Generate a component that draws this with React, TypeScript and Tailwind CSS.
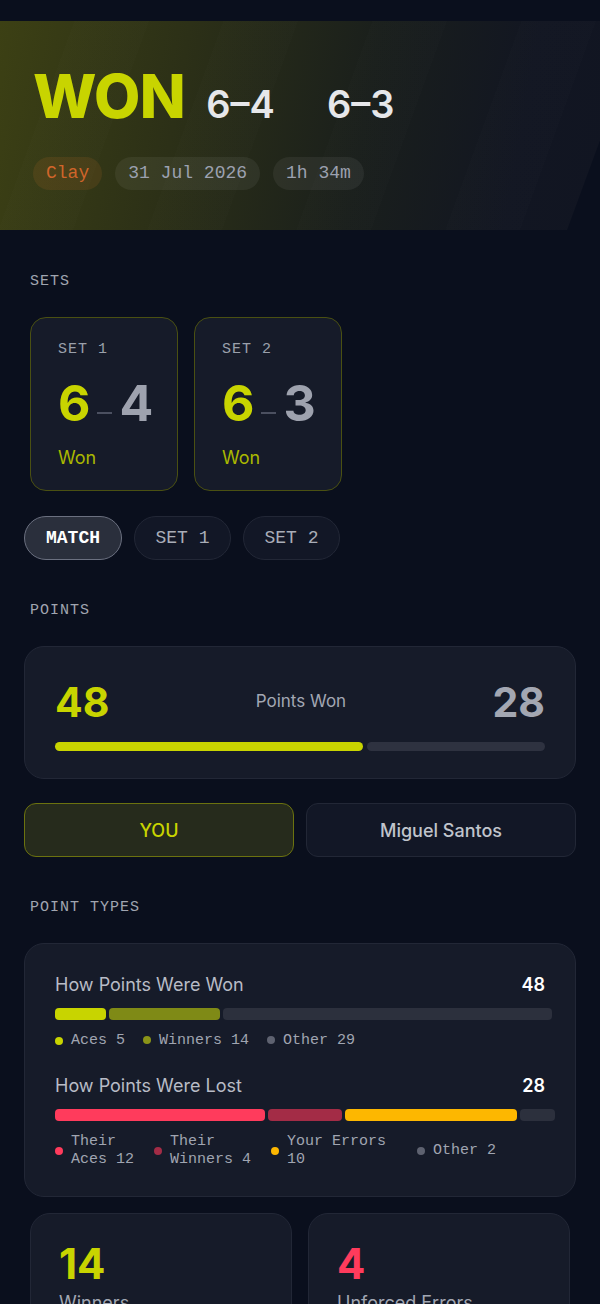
import React from 'react';

const sans = "font-['Inter','Noto_Sans',sans-serif]";
const mono = "font-['Liberation_Mono','DejaVu_Sans_Mono',monospace]";

const SectionLabel: React.FC<{ children: React.ReactNode }> = ({ children }) => (
  <div className={`${mono} ml-[6px] text-[15px] leading-5 tracking-[1px] text-[#a0a5b0]`}>{children}</div>
);

const SetCard: React.FC<{ label: string; you: number; them: number }> = ({ label, you, them }) => (
  <div className="w-[148px] h-[174px] rounded-[16px] border border-[#4a5012] bg-[#161b29] pl-[27px] pt-[22px]">
    <div className={`${mono} text-[15px] leading-5 tracking-[1px] text-[#9aa0ab]`}>{label}</div>
    <div className={`${sans} mt-[18px] flex items-center font-bold text-[50px] leading-[50px]`}>
      <span className="text-[#c8d400]">{you}</span>
      <span className="mx-[7px] mt-[20px] h-[2px] w-[15px] bg-[#4b5060]" />
      <span className="text-[#9ea2ae]">{them}</span>
    </div>
    <div className={`${sans} mt-[18px] text-[18px] leading-6 text-[#aab800]`}>Won</div>
  </div>
);

const Dot: React.FC<{ color: string }> = ({ color }) => (
  <span className={`inline-block w-[8px] h-[8px] rounded-full shrink-0 ${color}`} />
);

export default function App() {
  return (
    <div className={`${sans} min-h-screen w-[600px] bg-[#0a0f1d] pt-[21px] overflow-hidden`}>
      {/* Header */}
      <div className="relative h-[209px] bg-[linear-gradient(100deg,#3c4014_0%,#2c3017_30%,#1a1f1c_60%,#121622_85%,#111522_100%)] [clip-path:polygon(0_0,100%_0,100%_57%,94.5%_100%,0_100%)]">
        <div className="absolute inset-0 bg-[repeating-linear-gradient(110deg,transparent_0px,transparent_70px,rgba(255,255,255,0.007)_70px,rgba(255,255,255,0.007)_140px)]" />
        <div className="relative pl-[33px] pt-[40px]">
          <div className="flex items-baseline">
            <span className="text-[60px] leading-[70px] font-extrabold tracking-[-0.5px] text-[#c8d400]">WON</span>
            <span className="ml-[21px] text-[38px] font-semibold text-[#e6e7ea]">6–4</span>
            <span className="ml-[52px] text-[38px] font-semibold text-[#e6e7ea]">6–3</span>
          </div>
          <div className={`${mono} mt-[24px] flex gap-[13px] text-[18px] leading-[33px]`}>
            <span className="rounded-full bg-[rgba(200,110,40,0.14)] px-[13px] text-[#d0652a]">Clay</span>
            <span className="rounded-full bg-[rgba(255,255,255,0.06)] px-[13px] text-[#9ca1b0]">31 Jul 2026</span>
            <span className="rounded-full bg-[rgba(255,255,255,0.06)] px-[13px] text-[#9ca1b0]">1h 34m</span>
          </div>
        </div>
      </div>

      <div className="px-6 pt-[42px]">
        <SectionLabel>SETS</SectionLabel>
        <div className="ml-[6px] mt-[25px] flex gap-[16px]">
          <SetCard label="SET 1" you={6} them={4} />
          <SetCard label="SET 2" you={6} them={3} />
        </div>

        {/* Tabs */}
        <div className={`${mono} mt-[25px] flex gap-[12px] text-[18px]`}>
          <button className="h-[44px] w-[98px] rounded-full border border-[#6b7080] bg-[#2a2f3c] font-bold text-white">MATCH</button>
          <button className="h-[44px] w-[97px] rounded-full border border-[#222736] bg-[#121726] text-[#a9adb8]">SET 1</button>
          <button className="h-[44px] w-[97px] rounded-full border border-[#222736] bg-[#121726] text-[#a9adb8]">SET 2</button>
        </div>

        <div className="mt-[41px]">
          <SectionLabel>POINTS</SectionLabel>
        </div>
        <div className="mt-[25px] h-[133px] rounded-[20px] border border-[#222736] bg-[#161b29] px-[30px] pt-[32px]">
          <div className="flex items-center justify-between">
            <span className="text-[41px] leading-[46px] font-bold text-[#c8d400]">48</span>
            <span className="text-[17px] text-[#a2a7b3]">Points Won</span>
            <span className="text-[41px] leading-[46px] font-bold text-[#a3a7b2]">28</span>
          </div>
          <div className="mt-[17px] flex gap-[4px]">
            <div className="h-[9px] w-[308px] rounded-full bg-[#c8d400]" />
            <div className="h-[9px] flex-1 rounded-full bg-[#2e3240]" />
          </div>
        </div>

        <div className="mt-[24px] flex gap-[12px] text-[18px] font-medium">
          <button className="h-[54px] flex-1 rounded-[12px] border border-[#6b720f] bg-[#262b1c] text-[#c8d400]">YOU</button>
          <button className="h-[54px] flex-1 rounded-[12px] border border-[#222736] bg-[#121726] text-[#c0c4cc]">Miguel Santos</button>
        </div>

        <div className="mt-[41px]">
          <SectionLabel>POINT TYPES</SectionLabel>
        </div>

        <div className="mt-[25px] h-[254px] rounded-[20px] border border-[#222736] bg-[#161b29] px-[30px] pt-[29px]">
          <div className="flex items-center justify-between">
            <span className="text-[18px] leading-6 text-[#b8bcc6]">How Points Were Won</span>
            <span className="text-[18px] leading-6 font-semibold text-white">48</span>
          </div>
          <div className="mt-[11px] flex gap-[3px] w-[497px]">
            <div className="h-[12px] w-[51px] rounded-[4px] bg-[#c8d400]" />
            <div className="h-[12px] w-[111px] rounded-[4px] bg-[#7f8a16]" />
            <div className="h-[12px] w-[329px] rounded-[4px] bg-[#2c303d]" />
          </div>
          <div className={`${mono} mt-[12px] flex items-center text-[15px] leading-[18px] text-[#a0a5b1]`}>
            <Dot color="bg-[#c8d400]" />
            <span className="ml-[8px]">Aces 5</span>
            <span className="ml-[18px]"><Dot color="bg-[#8a9418]" /></span>
            <span className="ml-[8px]">Winners 14</span>
            <span className="ml-[18px]"><Dot color="bg-[#5e6270]" /></span>
            <span className="ml-[8px]">Other 29</span>
          </div>

          <div className="mt-[24px] flex items-center justify-between">
            <span className="text-[18px] leading-6 text-[#b8bcc6]">How Points Were Lost</span>
            <span className="text-[18px] leading-6 font-semibold text-white">28</span>
          </div>
          <div className="mt-[11px] flex gap-[3px] w-[501px]">
            <div className="h-[12px] w-[210px] rounded-[4px] bg-[#ff3b5c]" />
            <div className="h-[12px] w-[74px] rounded-[4px] bg-[#a32c46]" />
            <div className="h-[12px] w-[172px] rounded-[4px] bg-[#fdb700]" />
            <div className="h-[12px] w-[35px] rounded-[4px] bg-[#2c303d]" />
          </div>
          <div className={`${mono} mt-[12px] flex items-center text-[15px] leading-[18px] text-[#a0a5b1]`}>
            <div className="flex items-center gap-[8px] w-[99px]">
              <Dot color="bg-[#ff3b5c]" />
              <span>Their<br />Aces 12</span>
            </div>
            <div className="flex items-center gap-[8px] w-[117px]">
              <Dot color="bg-[#a32c46]" />
              <span>Their<br />Winners 4</span>
            </div>
            <div className="flex items-center gap-[8px] w-[146px]">
              <Dot color="bg-[#fdb700]" />
              <span>Your Errors<br />10</span>
            </div>
            <div className="flex items-center gap-[8px]">
              <Dot color="bg-[#5e6270]" />
              <span>Other 2</span>
            </div>
          </div>
        </div>

        <div className="mx-[6px] mt-[16px] flex gap-[16px]">
          <div className="h-[140px] flex-1 rounded-[20px] border border-[#222736] bg-[#161b29] pl-[28px] pt-[27px]">
            <div className="text-[42px] leading-[46px] font-bold text-[#c8d400]">14</div>
            <div className="mt-[4px] text-[18px] leading-6 text-[#a2a7b3]">Winners</div>
          </div>
          <div className="h-[140px] flex-1 rounded-[20px] border border-[#222736] bg-[#161b29] pl-[28px] pt-[27px]">
            <div className="text-[42px] leading-[46px] font-bold text-[#ff3b5c]">4</div>
            <div className="mt-[4px] text-[18px] leading-6 text-[#a2a7b3]">Unforced Errors</div>
          </div>
        </div>
      </div>
    </div>
  );
}
